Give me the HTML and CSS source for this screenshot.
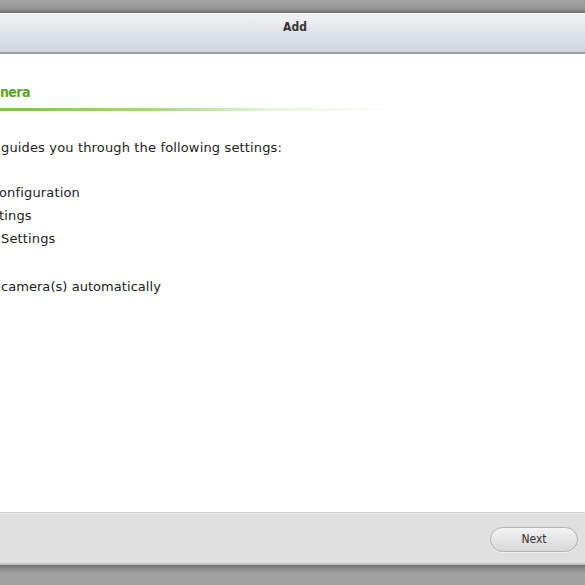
FILE: index.html
```html
<!DOCTYPE html>
<html>
<head>
<meta charset="utf-8">
<link rel="stylesheet" href="styles.css">
</head>
<body>
<div class="screen">
  <div class="topband"></div>
  <div class="titlebar"><span class="title">Add</span></div>
  <div class="content">
    <div class="heading">nera</div>
    <div class="rule"></div>
    <p class="intro">guides you through the following settings:</p>
    <ul class="steps">
      <li class="s1">onfiguration</li>
      <li class="s2">tings</li>
      <li class="s3">Settings</li>
    </ul>
    <p class="auto">camera(s) automatically</p>
  </div>
  <div class="footer">
    <button class="next">Next</button>
  </div>
  <div class="bottomband"></div>
</div>
</body>
</html>
```
FILE: styles.css
```css
html, body {
  margin: 0;
  padding: 0;
  width: 585px;
  height: 585px;
  overflow: hidden;
  background: #a0a0a0;
}
.screen {
  display: flex;
  flex-direction: column;
  height: 585px;
  font-family: "DejaVu Sans", Verdana, sans-serif;
  color: #222;
}
.topband {
  height: 13px;
  background: linear-gradient(#a3a3a3, #959595 70%, #6e6e6e);
}
.titlebar {
  height: 33px;
  border-top: 1px solid #f6f6f6;
  border-bottom: 2px solid #9a9ea3;
  background: linear-gradient(#f1f2f4, #cdd6df);
  display: flex;
  align-items: flex-start;
  justify-content: center;
  padding-top: 5px;
}
.title {
  font-family: "DejaVu Sans Condensed", "DejaVu Sans", sans-serif;
  font-size: 12px;
  line-height: 16px;
  font-weight: bold;
  color: #333;
  margin-left: 5px;
}
.content {
  flex: 1;
  background: #fff;
  padding-top: 29px;
}
.heading {
  font-family: "DejaVu Sans Condensed", "DejaVu Sans", sans-serif;
  font-size: 14px;
  font-weight: bold;
  color: #5aa61e;
  line-height: 18px;
  letter-spacing: -0.6px;
}
.rule {
  margin-top: 7px;
  height: 3px;
  width: 395px;
  background: linear-gradient(to right, #7cc24a, #a9d984 40%, rgba(220,240,200,0.6) 70%, rgba(255,255,255,0));
}
.intro {
  margin: 29px 0 0 1px;
  font-size: 13px;
  letter-spacing: 0.15px;
  line-height: 16px;
}
.steps {
  list-style: none;
  margin: 25px 0 0 0;
  padding: 0;
  font-size: 13px;
  letter-spacing: 0.15px;
  line-height: 23px;
}
.s1 { margin-left: -1px; }
.s2 { margin-left: -1px; }
.s3 { margin-left: 1px; }
.auto {
  margin: 27px 0 0 1px;
  font-size: 13px;
  letter-spacing: 0.05px;
  line-height: 20px;
}
.footer {
  height: 50px;
  border-top: 1px solid #c9c9c9;
  border-bottom: 2px solid #c4c4c4;
  background: #e0e0e0;
  display: flex;
  align-items: center;
  justify-content: flex-end;
  padding-right: 7px;
  box-shadow: inset 0 1px 0 #ececec;
}
.next {
  width: 88px;
  height: 25px;
  border-radius: 13px;
  border: 1px solid #b3b3b3;
  background: linear-gradient(#f4f4f4, #e4e4e4 50%, #d9d9d9);
  font-family: "DejaVu Sans Condensed", "DejaVu Sans", sans-serif;
  font-size: 12px;
  color: #333;
  padding: 0;
  margin-top: 2px;
  box-shadow: 0 1px 0 #f0f0f0;
}
.bottomband {
  height: 20px;
  background: linear-gradient(#6f6f6f, #8f8f8f 20%, #a2a2a2 45%, #a2a2a2);
}
```
